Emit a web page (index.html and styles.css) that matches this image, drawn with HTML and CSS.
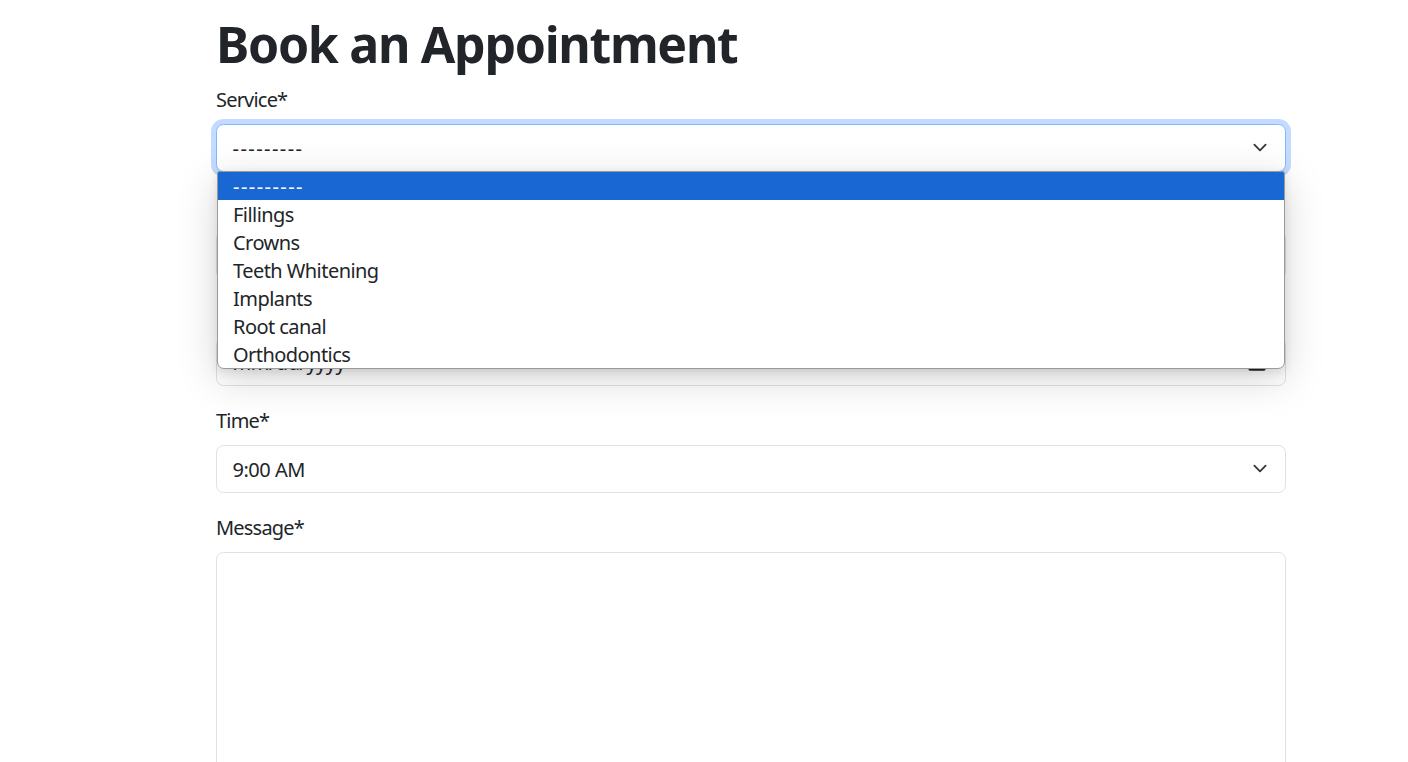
FILE: index.html
```html
<!DOCTYPE html>
<html lang="en">
<head>
<meta charset="utf-8">
<title>Book an Appointment</title>
<link rel="stylesheet" href="styles.css">
</head>
<body>
<main class="page">
  <h1 class="title">Book an Appointment</h1>
  <form class="form">
    <div class="group">
      <label class="label">Service*</label>
      <div class="select-wrap">
        <div class="field select focused">
          <span class="value dashes">---------</span>
          <svg class="chev" viewBox="0 0 16 16" width="20" height="15"><path fill="none" stroke="#343a40" stroke-linecap="round" stroke-linejoin="round" stroke-width="2" d="m2 5 6 6 6-6"/></svg>
        </div>
        <ul class="popup">
          <li class="opt active"><span class="dashes">---------</span></li>
          <li class="opt">Fillings</li>
          <li class="opt">Crowns</li>
          <li class="opt">Teeth Whitening</li>
          <li class="opt">Implants</li>
          <li class="opt">Root canal</li>
          <li class="opt">Orthodontics</li>
        </ul>
      </div>
    </div>
    <div class="group">
      <label class="label">Doctor*</label>
      <div class="field select">
        <span class="value dashes">---------</span>
        <svg class="chev" viewBox="0 0 16 16" width="20" height="15"><path fill="none" stroke="#343a40" stroke-linecap="round" stroke-linejoin="round" stroke-width="2" d="m2 5 6 6 6-6"/></svg>
      </div>
    </div>
    <div class="group">
      <label class="label">Date*</label>
      <div class="field select">
        <span class="value">mm/dd/yyyy</span>
        <svg class="cal" viewBox="0 0 16 16" width="18" height="20"><rect x="1" y="2.5" width="14" height="12.5" rx="1" fill="none" stroke="#212529" stroke-width="1.4"/><rect x="1" y="2.5" width="14" height="3" fill="#212529"/><rect x="4" y="1" width="1.5" height="3" fill="#212529"/><rect x="10.5" y="1" width="1.5" height="3" fill="#212529"/></svg>
      </div>
    </div>
    <div class="group">
      <label class="label">Time*</label>
      <div class="field select">
        <span class="value">9:00 AM</span>
        <svg class="chev" viewBox="0 0 16 16" width="20" height="15"><path fill="none" stroke="#343a40" stroke-linecap="round" stroke-linejoin="round" stroke-width="2" d="m2 5 6 6 6-6"/></svg>
      </div>
    </div>
    <div class="group">
      <label class="label">Message*</label>
      <div class="field textarea"></div>
    </div>
  </form>
</main>
</body>
</html>
```
FILE: styles.css
```css
* { box-sizing: border-box; }
html, body { margin: 0; padding: 0; background: #fff; }
body {
  font-family: "Noto Sans", "Open Sans", sans-serif;
  color: #212529;
  overflow: hidden;
  height: 762px;
}
.page {
  width: 1070px;
  margin-left: 216px;
  padding-top: 14px;
}
.title {
  font-size: 50px;
  font-weight: 700;
  line-height: 60px;
  margin: 0 0 11px 0;
  letter-spacing: -1.3px;
}
.form { margin: 0; }
.group { margin-bottom: 20.5px; }
.label {
  display: block;
  font-size: 20px;
  line-height: 30px;
  margin-bottom: 9px;
  letter-spacing: -0.8px;
}
.select-wrap { position: relative; }
.field {
  border: 1.25px solid #dee2e6;
  border-radius: 7.5px;
  background: #fff;
  font-size: 20px;
}
.select {
  height: 47.5px;
  display: flex;
  align-items: center;
  justify-content: space-between;
  padding: 3px 15px 0 15.5px;
}
.value { line-height: 30px; letter-spacing: -0.5px; }
.dashes { letter-spacing: 1.45px; }
.focused {
  border-color: #86b7fe;
  box-shadow: 0 0 0 5px rgba(13, 110, 253, 0.25);
}
.chev { display: block; margin-top: -3px; }
.cal { display: block; margin-right: 4px; margin-top: -3px; }
.textarea { height: 260px; }
.popup {
  position: absolute;
  top: 100%;
  left: 1px;
  right: 1px;
  margin: -1px 0 0 0;
  padding: 0;
  list-style: none;
  background: #fff;
  border: 1px solid #9a9a9a;
  border-radius: 2px 2px 7px 7px;
  box-shadow: 0 10px 40px rgba(0, 0, 0, 0.17), 0 3px 10px rgba(0, 0, 0, 0.10);
  z-index: 10;
  overflow: hidden;
}
.opt {
  height: 28px;
  line-height: 30px;
  font-size: 20px;
  padding-left: 15px;
  color: #212529;
  overflow: hidden;
  letter-spacing: -0.55px;
}
.opt.active {
  background: #1967d2;
  color: #fff;
}
```
